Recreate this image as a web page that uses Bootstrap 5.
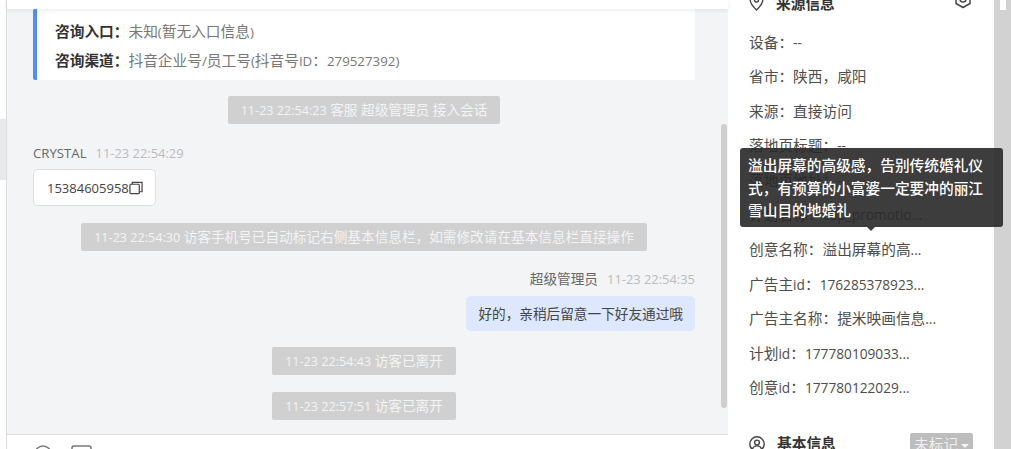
<!DOCTYPE html>
<html lang="zh">
<head>
<meta charset="utf-8">
<title>会话</title>
<link href="https://cdn.jsdelivr.net/npm/bootstrap@5.3.0/dist/css/bootstrap.min.css" rel="stylesheet">
<style>
html,body{height:449px;overflow:hidden;background:#fff}
body{font-family:"Open Sans","Noto Sans CJK SC",sans-serif;font-size:14.7px;color:#555;line-height:22px}
.shell{height:449px;width:1011px}
.lat{font-size:13.7px}
.sliver{width:6px;flex:none}
.sliver-patch{height:61px;margin-top:119px;background:#e9e9e9}
.chat-col{width:722px;flex:none;border-left:1px solid #dcdcdc;position:relative}
.chat-top{height:9px;flex:none;background:#fff;box-shadow:0 1px 5px rgba(0,0,0,.09);position:relative}
.chat-body{height:425px;flex:none;background:#f3f4f6;padding:0 33px 0 26px;font-size:13.65px}
.chat-body .lat{font-size:12.6px}
.chat-body .who .lat{font-size:12.9px}
.chat-body .who .lat-name{font-size:13.2px}
.chat-body .phone .lat{font-size:13px}
.chat-tools{flex:1;background:#fff;border-top:1px solid #dcdcdc;padding:10px 0 0 27px;gap:19px}
.chat-tools svg{display:block;flex:none}
.thumb{position:absolute;left:714px;top:124px;width:6px;height:284px;background:#cfcfcf;border-radius:3px}
.entry{background:#fff;border-left:4px solid #4e8eff;border-radius:2px;height:71px;padding:8px 0 0 18px;line-height:28px;color:#777;font-size:14.7px}
.chat-body .entry .lat{font-size:13.3px}
.entry b{color:#333;font-weight:700}
.sysmsg{background:#d0d0d0;color:#f3f4f6;border-radius:2px;height:28px;line-height:28px;padding:0 13px}
.who{line-height:20px;color:#666}
.who .stamp{color:#bbb;margin-left:9px}
.phone{background:#fff;border:1px solid #dcdfe6;border-radius:5px;height:37px;padding:0 12px 0 13px;line-height:36px;color:#444}
.phone svg{vertical-align:-2px}
.reply{background:#dde8ff;border-radius:5px;height:35px;line-height:35px;padding:0 12px;color:#444}
.side{width:266px;flex:none;padding:0 21px;overflow:hidden;color:#4d4d4d}
.side-head{font-weight:700;color:#333;font-size:14.7px;line-height:22px;height:22px;gap:12px}
.side-row{height:34.6px;line-height:34.6px;white-space:nowrap}
.side-rows{margin-top:10.5px}
.head-pin{margin-bottom:2px}
.head-hex{margin:0 1px 8px 0}
.tag-off{background:#bdbdbd;color:#f0f0f0;border-radius:2px;width:63px;height:30px;padding-left:4px;line-height:22px;margin-top:1px;flex:none}
.caret-mini{display:inline-block;border:4px solid transparent;border-top-color:#f5f5f5;border-bottom:0;margin-left:3px;vertical-align:2px}
.rail{flex:1;background:#d2d2d2;padding-left:6px}
.rail-bit{width:6px;height:10px;background:#fff}
.tip{position:absolute;left:740px;top:148px;width:263px;height:79px;background:rgba(40,40,40,.9);border-radius:3px;color:#fff;padding:6px 8px;line-height:22.5px;font-weight:500}
.tip::after{content:"";position:absolute;left:127px;top:79px;border:4px solid transparent;border-top-color:rgba(40,40,40,.9);border-bottom:0}
</style>
</head>
<body>
<div class="shell d-flex position-relative">
  <div class="sliver"><div class="sliver-patch"></div></div>
  <div class="chat-col d-flex flex-column">
    <div class="chat-top"></div>
    <div class="chat-body d-flex flex-column">
      <div class="entry">
        <div><b>咨询入口：</b>未知<span class="lat">(</span>暂无入口信息<span class="lat">)</span></div>
        <div><b>咨询渠道：</b>抖音企业号<span class="lat">/</span>员工号<span class="lat">(</span>抖音号<span class="lat">ID</span>：<span class="lat">279527392)</span></div>
      </div>
      <div class="d-flex justify-content-center mt-3"><div class="sysmsg"><span class="lat">11-23 22:54:23</span> 客服 超级管理员 接入会话</div></div>
      <div class="who" style="margin-top:19px"><span class="lat lat-name">CRYSTAL</span><span class="stamp lat">11-23 22:54:29</span></div>
      <div class="d-flex" style="margin-top:6px"><div class="phone"><span class="lat">15384605958</span><svg width="14" height="14" viewBox="0 0 15 14" fill="none" stroke="#444" stroke-width="1.3"><rect x="1" y="3" width="10" height="10" rx="1"/><path d="M3.5 3V1h10.5v10h-3"/></svg></div></div>
      <div class="d-flex justify-content-center" style="margin-top:17px"><div class="sysmsg"><span class="lat">11-23 22:54:30</span> 访客手机号已自动标记右侧基本信息栏，如需修改请在基本信息栏直接操作</div></div>
      <div class="who text-end" style="margin-top:18px">超级管理员<span class="stamp lat">11-23 22:54:35</span></div>
      <div class="d-flex justify-content-end" style="margin-top:7px"><div class="reply">好的，亲稍后留意一下好友通过哦</div></div>
      <div class="d-flex justify-content-center" style="margin-top:16px"><div class="sysmsg"><span class="lat">11-23 22:54:43</span> 访客已离开</div></div>
      <div class="d-flex justify-content-center" style="margin-top:17px"><div class="sysmsg"><span class="lat">11-23 22:57:51</span> 访客已离开</div></div>
    </div>
    <div class="chat-tools d-flex">
      <svg width="18" height="18" viewBox="0 0 18 18" fill="none" stroke="#777" stroke-width="1.5"><circle cx="9" cy="9" r="8"/></svg>
      <svg width="21" height="18" viewBox="0 0 21 18" fill="none" stroke="#777" stroke-width="1.5"><rect x="1" y="1" width="19" height="16" rx="2"/></svg>
    </div>
    <div class="thumb"></div>
  </div>
  <div class="side">
    <div class="side-head d-flex align-items-center" style="margin-top:-8px">
      <svg class="head-pin" width="15" height="18" viewBox="0 0 15 18" fill="none" stroke="#444" stroke-width="1.4"><path d="M7.5 17C4 13.6 1.2 10.5 1.2 7a6.3 6.3 0 0 1 12.6 0c0 3.5-2.8 6.6-6.3 10z"/><circle cx="7.5" cy="7" r="2"/></svg>
      <span class="flex-grow-1">来源信息</span>
      <svg class="head-hex" width="18" height="20" viewBox="0 0 18 20" fill="none" stroke="#444" stroke-width="1.5" stroke-linejoin="round"><path d="M9 1.5l7 4v9l-7 4-7-4v-9z"/><circle cx="9" cy="10" r="3"/></svg>
    </div>
    <div class="side-rows">
      <div class="side-row">设备：<span class="lat">--</span></div>
      <div class="side-row">省市：陕西，咸阳</div>
      <div class="side-row">来源：直接访问</div>
      <div class="side-row">落地页标题：<span class="lat">--</span></div>
      <div class="side-row">落地页地址：<span class="lat">--</span></div>
      <div class="side-row">计划名称：<span class="lat">cdp_promotio...</span></div>
      <div class="side-row">创意名称：溢出屏幕的高<span class="lat">...</span></div>
      <div class="side-row">广告主<span class="lat">id</span>：<span class="lat">176285378923...</span></div>
      <div class="side-row">广告主名称：提米映画信息<span class="lat">...</span></div>
      <div class="side-row">计划<span class="lat">id</span>：<span class="lat">177780109033...</span></div>
      <div class="side-row">创意<span class="lat">id</span>：<span class="lat">177780122029...</span></div>
    </div>
    <div class="side-head d-flex align-items-start" style="margin-top:27px">
      <svg class="mt-1" width="16" height="16" viewBox="0 0 16 16" fill="none" stroke="#444" stroke-width="1.4"><circle cx="8" cy="8" r="7.2"/><circle cx="8" cy="6.5" r="2.4"/><path d="M3.4 13.2c.6-2.3 2.4-3.3 4.6-3.3s4 1 4.6 3.3"/></svg>
      <span class="flex-grow-1">基本信息</span>
      <span class="tag-off fw-normal">未标记<i class="caret-mini"></i></span>
    </div>
  </div>
  <div class="rail"><div class="rail-bit"></div></div>
  <div class="tip">溢出屏幕的高级感，告别传统婚礼仪式，有预算的小富婆一定要冲的丽江雪山目的地婚礼</div>
</div>
<script src="https://cdn.jsdelivr.net/npm/bootstrap@5.3.0/dist/js/bootstrap.bundle.min.js"></script>
</body>
</html>
